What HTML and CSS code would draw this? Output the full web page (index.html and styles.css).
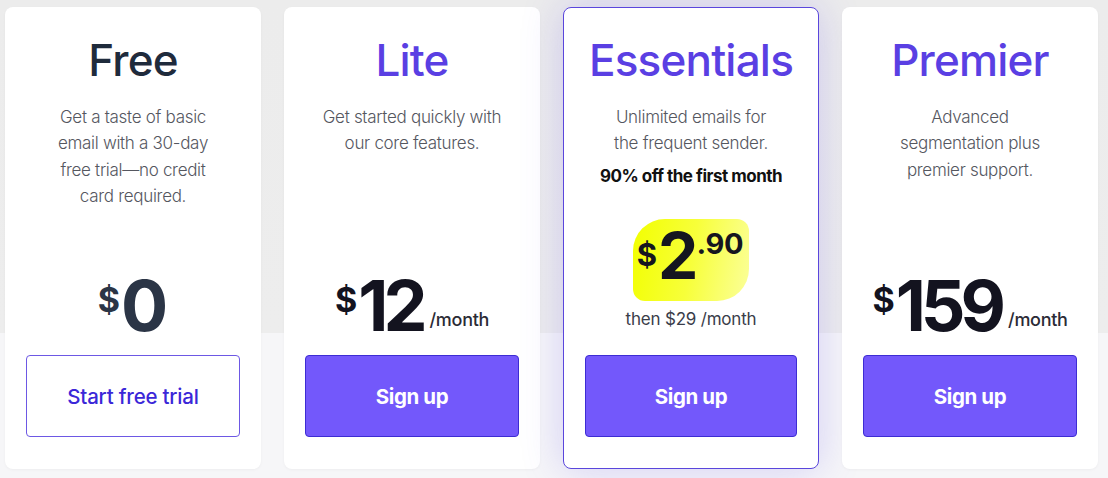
FILE: index.html
```html
<!DOCTYPE html>
<html lang="en">
<head>
<meta charset="utf-8">
<title>Pricing</title>
<link rel="stylesheet" href="styles.css">
</head>
<body>
<main class="plans">
  <section class="card">
    <h2 class="plan-title plan-title--dark">Free</h2>
    <p class="plan-desc">Get a taste of basic<br>email with a 30-day<br>free trial—no credit<br>card required.</p>
    <div class="price-block">
      <div class="price price--muted"><span class="cur">$</span><span class="amt">0</span></div>
    </div>
    <a class="btn btn--outline" href="#">Start free trial</a>
  </section>

  <section class="card">
    <h2 class="plan-title">Lite</h2>
    <p class="plan-desc">Get started quickly with<br>our core features.</p>
    <div class="price-block">
      <div class="price"><span class="cur">$</span><span class="amt">12</span><span class="per">/month</span></div>
    </div>
    <a class="btn btn--solid" href="#">Sign up</a>
  </section>

  <section class="card card--featured">
    <h2 class="plan-title">Essentials</h2>
    <p class="plan-desc">Unlimited emails for<br>the frequent sender.</p>
    <p class="promo">90% off the first month</p>
    <div class="price-block price-block--promo">
      <div class="badge"><span class="cur cur--sm">$</span><span class="amt amt--sm">2</span><span class="cents">.90</span></div>
      <p class="then">then $29 /month</p>
    </div>
    <a class="btn btn--solid" href="#">Sign up</a>
  </section>

  <section class="card">
    <h2 class="plan-title">Premier</h2>
    <p class="plan-desc">Advanced<br>segmentation plus<br>premier support.</p>
    <div class="price-block">
      <div class="price"><span class="cur">$</span><span class="amt">159</span><span class="per">/month</span></div>
    </div>
    <a class="btn btn--solid" href="#">Sign up</a>
  </section>
</main>
</body>
</html>
```

FILE: styles.css
```css
* { box-sizing: border-box; }

html, body {
  margin: 0;
  height: 100%;
}

body {
  font-family: Inter, "Liberation Sans", sans-serif;
  background: linear-gradient(to bottom, #ececec 0, #ededed 333px, #f6f6f8 333px, #f6f6f8 100%);
  color: #1e2a3b;
}

.plans {
  display: grid;
  grid-template-columns: repeat(4, 256px);
  column-gap: 23px;
  padding: 7px 0 0 5px;
}

.card {
  height: 462px;
  background: #ffffff;
  border-radius: 8px;
  padding: 27px 21px 32px;
  display: flex;
  flex-direction: column;
  align-items: stretch;
  text-align: center;
  box-shadow: 0 1px 3px rgba(0, 0, 0, 0.04);
}

.card--featured {
  border: 1px solid #5a46dc;
  padding: 26px 21px 31px;
  box-shadow: 0 0 40px rgba(110, 90, 240, 0.26);
}

.plan-title {
  margin: 0;
  font-size: 44px;
  line-height: 53px;
  font-weight: 500;
  letter-spacing: -0.8px;
  color: #5a3fe3;
}

.plan-title--dark {
  color: #1f2b3c;
}

.plan-desc {
  margin: 17px 0 0;
  font-size: 17px;
  line-height: 26.3px;
  font-weight: 300;
  letter-spacing: -0.3px;
  color: #55575f;
}

.promo {
  margin: 8px 0 0;
  font-size: 17px;
  line-height: 22px;
  font-weight: 700;
  letter-spacing: -0.5px;
  color: #111;
}

.price-block {
  margin-top: auto;
  margin-bottom: -3px;
  display: flex;
  flex-direction: column;
  align-items: center;
}

.price-block--promo {
  margin-bottom: 3px;
}

.price {
  display: flex;
  align-items: flex-start;
  justify-content: center;
  color: #13131f;
  height: 60px;
}

.price--muted {
  color: #2b3546;
}

.cur {
  font-size: 34px;
  font-weight: 700;
  line-height: 1;
  margin-top: 7px;
  margin-right: 1px;
}

.amt {
  font-size: 70px;
  font-weight: 700;
  line-height: 60px;
  letter-spacing: -5px;
  padding-right: 5px;
}

.per {
  align-self: flex-end;
  font-size: 18px;
  font-weight: 500;
  letter-spacing: -0.3px;
  line-height: 1;
  margin-bottom: 7px;
  margin-left: 2px;
  color: #2b2b36;
}

.badge {
  width: 116px;
  height: 82px;
  display: flex;
  align-items: flex-start;
  justify-content: center;
  padding-top: 9px;
  padding-right: 2px;
  color: #15151f;
  background: linear-gradient(100deg, #f2ff00 0%, #f7ff3a 50%, #fbff9a 100%);
  border-radius: 32px 12px 32px 12px;
}

.cur--sm {
  font-size: 31px;
  margin-top: 11px;
  margin-right: 1px;
}

.amt--sm {
  font-size: 64px;
  line-height: 56px;
  letter-spacing: -2px;
  padding-right: 0;
}

.cents {
  font-size: 29px;
  font-weight: 700;
  line-height: 1;
  letter-spacing: -0.3px;
  margin-top: 1px;
}

.then {
  margin: 7px 0 0;
  font-size: 17px;
  line-height: 22px;
  font-weight: 400;
  letter-spacing: -0.2px;
  color: #3a3d4a;
}

.btn {
  display: flex;
  align-items: center;
  justify-content: center;
  height: 82px;
  margin-top: 22px;
  border-radius: 4px;
  text-decoration: none;
  font-size: 20.5px;
}

.btn--solid {
  background: #7358fb;
  border: 1px solid #3d2cd3;
  color: #ffffff;
  font-weight: 700;
  letter-spacing: -0.4px;
}

.btn--outline {
  background: #ffffff;
  border: 1px solid #6d58e4;
  color: #3b27d8;
  font-weight: 500;
  letter-spacing: -0.2px;
}
```
